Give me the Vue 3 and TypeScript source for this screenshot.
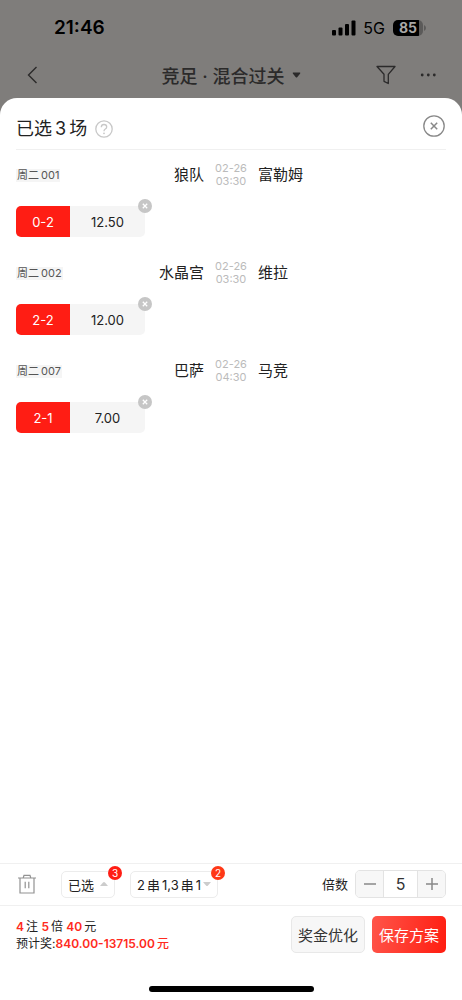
<script setup lang="ts">
import { computed, ref } from 'vue'

interface Match {
  id: number
  code: string
  home: string
  away: string
  date: string
  time: string
  score: string
  odds: string
}

const matches = ref<Match[]>([
  { id: 1, code: '001', home: '狼队', away: '富勒姆', date: '02-26', time: '03:30', score: '0-2', odds: '12.50' },
  { id: 2, code: '002', home: '水晶宫', away: '维拉', date: '02-26', time: '03:30', score: '2-2', odds: '12.00' },
  { id: 3, code: '007', home: '巴萨', away: '马竞', date: '02-26', time: '04:30', score: '2-1', odds: '7.00' },
])

const bets = 4
const multiple = ref(5)
const cost = computed(() => bets * multiple.value * 2)
const low = computed(() => (168 * multiple.value).toFixed(2))
const high = computed(() => (2743 * multiple.value).toFixed(2))

function remove(id: number) {
  matches.value = matches.value.filter((m) => m.id !== id)
}
function step(delta: number) {
  multiple.value = Math.max(1, multiple.value + delta)
}
</script>

<template>
  <div class="page">
    <header class="top">
      <div class="status">
        <span class="clock">21:46</span>
        <div class="signals">
          <svg width="24" height="16" viewBox="0 0 24 16" aria-hidden="true">
            <rect x="0" y="10" width="4" height="5.500" rx="1" />
            <rect x="6.500" y="7.500" width="4" height="8" rx="1" />
            <rect x="13" y="4" width="4" height="11.500" rx="1" />
            <rect x="19.500" y="0.500" width="4" height="15" rx="1" />
          </svg>
          <span class="network">5G</span>
          <div class="battery"><span>85</span></div>
          <svg class="tip" width="2" height="6" viewBox="0 0 2 6" aria-hidden="true"><path d="M0 0Q2 1 2 3T0 6Z" fill="#5b5a59" /></svg>
        </div>
      </div>
      <nav class="nav">
        <button class="plain back" type="button" aria-label="返回">
          <svg width="12" height="18" viewBox="0 0 12 18"><path d="M10.500 1 2.500 9l8 8" fill="none" stroke="#2b2a2a" stroke-width="1.400" /></svg>
        </button>
        <button class="plain title" type="button">
          竞足 · 混合过关
          <svg width="9" height="6" viewBox="0 0 9 6"><path d="M1 .5h7q.8.300 0 1.300L5.400 5q-.9 1-1.800 0L1 1.800Q.2.800 1 .5Z" fill="#2b2a2a" /></svg>
        </button>
        <div class="actions">
          <button class="plain" type="button" aria-label="筛选">
            <svg width="20" height="20" viewBox="0 0 20 20"><path d="M1 1.500h18L12.300 9.300v9.200l-4.300-2.200V9.300Z" fill="none" stroke="#2b2a2a" stroke-width="1.300" stroke-linejoin="round" /></svg>
          </button>
          <button class="plain" type="button" aria-label="更多">
            <svg width="16" height="4" viewBox="0 0 16 4" fill="#2b2a2a"><circle cx="2.200" cy="2" r="1.400" /><circle cx="8.300" cy="2" r="1.400" /><circle cx="14.300" cy="2" r="1.400" /></svg>
          </button>
        </div>
      </nav>
    </header>

    <main class="sheet">
      <div class="sheet-head">
        <h1>已选<span class="count">{{ matches.length }}</span>场</h1>
        <button class="plain" type="button" aria-label="帮助">
          <svg width="18" height="18" viewBox="0 0 18 18" fill="none" stroke="#c8c8c8" stroke-width="1.300">
            <circle cx="9" cy="9" r="8.200" />
            <path d="M6.300 7.200Q6.300 4.500 9 4.500T11.700 7Q11.700 8.200 10.300 9T9 11.200" />
            <circle cx="9" cy="13.300" r=".9" fill="#c8c8c8" stroke="none" />
          </svg>
        </button>
        <button class="plain close" type="button" aria-label="关闭">
          <svg width="22" height="22" viewBox="0 0 22 22" fill="none" stroke="#888"><circle cx="11" cy="11" r="10.200" stroke-width="1.300" /><path d="m7.800 7.800 6.400 6.400m0-6.400-6.400 6.400" stroke-width="1.500" /></svg>
        </button>
      </div>

      <ul class="matches">
        <li v-for="m in matches" :key="m.id">
          <div class="fixture">
            <div class="side"><span class="code">周二<span class="code-no">{{ m.code }}</span></span><span class="team">{{ m.home }}</span></div>
            <div class="kickoff">{{ m.date }}<br />{{ m.time }}</div>
            <span class="team">{{ m.away }}</span>
          </div>
          <div class="pick">
            <span class="score">{{ m.score }}</span>
            <span class="odds">{{ m.odds }}</span>
            <button class="plain remove" type="button" aria-label="删除" @click="remove(m.id)">
              <svg width="14" height="14" viewBox="0 0 14 14"><circle cx="7" cy="7" r="7" fill="#c6c6c6" /><path d="m4.800 4.800 4.400 4.400m0-4.400L4.800 9.200" stroke="#fff" stroke-width="1.300" /></svg>
            </button>
          </div>
        </li>
      </ul>

      <div class="toolbar">
        <button class="plain trash" type="button" aria-label="清空">
          <svg width="20" height="20" viewBox="0 0 20 20" fill="none" stroke="#929292" stroke-width="1.200"><path d="M1 4h18M3 4v15h14V4M6.200 4l.8-2.600h6l.8 2.600M8.200 7.800v6.500M11.800 7.800v6.500" /></svg>
        </button>
        <button class="chip" type="button">
          已选
          <svg width="8" height="4" viewBox="0 0 8 4"><path d="M0 4 3 .5q1-1 2 0L8 4Z" fill="#ccc" /></svg>
          <span class="badge">3</span>
        </button>
        <button class="chip combo" type="button">
          <span><i>2</i>串<i>1,3</i>串<i>1</i></span>
          <svg width="8" height="4" viewBox="0 0 8 4"><path d="M0 0 3 3.500q1 1 2 0L8 0Z" fill="#ccc" /></svg>
          <span class="badge orange">2</span>
        </button>
        <label class="times" for="multiple">倍数</label>
        <div class="stepper">
          <button type="button" aria-label="减少" @click="step(-1)"><svg width="14" height="14" viewBox="0 0 14 14"><path d="M1 7h12" stroke="#888" stroke-width="1.500" /></svg></button>
          <input id="multiple" v-model.number="multiple" type="text" inputmode="numeric" />
          <button type="button" aria-label="增加" @click="step(1)"><svg width="14" height="14" viewBox="0 0 14 14"><path d="M1 7h12M7 1v12" stroke="#888" stroke-width="1.500" /></svg></button>
        </div>
      </div>

      <footer class="foot">
        <div class="summary">
          <p><b>{{ bets }}</b>注 <b>{{ multiple }}</b>倍 <b>{{ cost }}</b>元</p>
          <p>预计奖:<b>{{ low }}-{{ high }}</b><strong>元</strong></p>
        </div>
        <button class="action" type="button">奖金优化</button>
        <button class="action primary" type="button">保存方案</button>
      </footer>
      <div class="home-bar"></div>
    </main>
  </div>
</template>

<style>
body {
  margin: 0;
}
</style>

<style scoped>
* {
  box-sizing: border-box;
}
.page {
  display: flex;
  flex-direction: column;
  min-height: 100vh;
  background: #7f7d7b;
  color: #222;
  font-family: Inter, "Noto Sans CJK SC", sans-serif;
  font-size: 13px;
}
button,
input {
  font: inherit;
  color: inherit;
}
.plain {
  display: flex;
  align-items: center;
  padding: 0;
  border: 0;
  background: none;
}
svg {
  display: block;
  flex: none;
}
.status {
  display: flex;
  align-items: center;
  justify-content: space-between;
  height: 51px;
  padding: 4px 36px 0 54px;
  color: #000;
}
.clock {
  font-size: 19px;
  font-weight: 600;
}
.signals {
  display: flex;
  align-items: center;
}
.network {
  margin: 0 8px 0 7px;
  font-size: 16px;
}
.battery {
  display: flex;
  align-items: center;
  justify-content: center;
  width: 30px;
  height: 16px;
  border-radius: 5px;
  background: linear-gradient(90deg, #000 85%, #5b5a59 85%);
  color: #a9a8a6;
  font-size: 14px;
  font-weight: 700;
  line-height: 16px;
}
.tip {
  margin-left: 1px;
}
.nav {
  display: grid;
  grid-template-columns: 1fr auto 1fr;
  align-items: center;
  height: 47px;
  padding: 0 26px;
}
.title {
  gap: 7px;
  color: #2b2a2a;
  font-size: 18px;
  font-weight: 500;
}
.actions {
  display: flex;
  justify-content: flex-end;
  gap: 24px;
}
.sheet {
  display: flex;
  flex: 1;
  flex-direction: column;
  border-radius: 17px 17px 0 0;
  background: #fff;
}
.sheet-head {
  display: flex;
  align-items: center;
  gap: 8px;
  height: 52px;
  margin: 0 16px;
  padding-top: 11px;
  border-bottom: 1px solid #f0f0f0;
}
h1 {
  margin: 0;
  font-size: 18px;
  font-weight: 400;
  line-height: 26px;
}
.count {
  margin: 0 3px;
}
.close {
  margin: -6px 1px 0 auto;
}
.matches {
  display: flex;
  flex: 1;
  flex-direction: column;
  gap: 22px;
  margin: 0;
  padding: 12px 16px;
  list-style: none;
}
.fixture {
  display: grid;
  grid-template-columns: 1fr 32px 1fr;
  align-items: center;
  column-gap: 11px;
  height: 26px;
}
.side {
  display: flex;
  align-items: center;
  justify-content: space-between;
}
.code {
  padding: 0 1px;
  background: #f5f5f5;
  color: #555;
  font-size: 11px;
  line-height: 13px;
}
.code-no {
  margin-left: 2px;
}
.team {
  font-size: 15px;
  line-height: 22px;
}
.kickoff {
  color: #bbb;
  font-size: 11px;
  line-height: 13px;
  text-align: center;
}
.pick {
  position: relative;
  display: flex;
  width: 129px;
  height: 31px;
  margin-top: 18px;
  margin-bottom: 1px;
  border-radius: 5px;
  background: #f5f5f5;
  line-height: 32px;
  text-align: center;
}
.score {
  width: 54px;
  border-radius: 5px 0 0 5px;
  background: #ff1d14;
  color: #fff;
}
.odds {
  flex: 1;
}
.remove {
  position: absolute;
  top: -7px;
  right: -7px;
}
.toolbar {
  display: flex;
  align-items: center;
  height: 43px;
  padding: 0 16px 1px;
  border-top: 1px solid #f0f0f0;
  border-bottom: 1px solid #f0f0f0;
}
.trash {
  margin: 0 24px 0 1px;
}
.chip {
  position: relative;
  display: flex;
  align-items: center;
  gap: 6px;
  height: 27px;
  margin-right: 15px;
  padding: 0 6px;
  border: 1px solid #ececec;
  border-radius: 5px;
  background: #fff;
  white-space: nowrap;
}
.combo {
  gap: 2px;
}
.combo i {
  margin: 0 2px;
  font-style: normal;
}
.combo i:first-child {
  margin-left: 0;
}
.combo i:last-child {
  margin-right: 0;
}
.badge {
  position: absolute;
  top: -6px;
  right: -8px;
  width: 14px;
  height: 14px;
  border-radius: 50%;
  background: #ff1d14;
  color: #fff;
  font-size: 10px;
  line-height: 14px;
  text-align: center;
}
.orange {
  background: #ff3817;
}
.times {
  margin: 0 7px 0 auto;
  padding-bottom: 2px;
}
.stepper {
  display: flex;
  width: 91px;
  height: 28px;
  overflow: hidden;
  border: 1px solid #e3e3e3;
  border-radius: 5px;
}
.stepper button {
  display: grid;
  place-items: center;
  width: 27px;
  padding: 0;
  border: 0;
  background: #f7f7f7;
}
.stepper input {
  flex: 1;
  min-width: 0;
  padding: 0;
  border: solid #e3e3e3;
  border-width: 0 1px;
  border-radius: 0;
  background: #fff;
  color: #333;
  font-size: 16px;
  text-align: center;
}
.foot {
  display: flex;
  align-items: flex-start;
  gap: 7px;
  padding: 10px 16px 0;
}
.summary {
  flex: 1;
  padding-top: 2px;
  font-size: 12px;
  line-height: 17px;
  white-space: nowrap;
}
.summary p {
  margin: 0;
}
.summary b {
  margin-right: 2px;
  color: #ff2a20;
  font-weight: 600;
}
.summary strong {
  color: #ff2a20;
  font-weight: 500;
}
.action {
  width: 74px;
  height: 37px;
  padding: 0;
  border: 1px solid #e8e8e8;
  border-radius: 5px;
  background: #f7f7f7;
  color: #333;
  font-size: 15px;
  white-space: nowrap;
}
.primary {
  border: 0;
  background: linear-gradient(100deg, #ff554a, #ff1d10);
  color: #fff;
}
.home-bar {
  width: 165px;
  height: 6px;
  margin: 33px auto 8px;
  border-radius: 3px;
  background: #000;
}
</style>
